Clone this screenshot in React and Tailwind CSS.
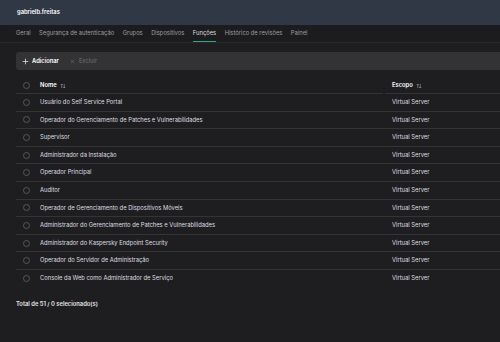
import React from 'react';

const tabs = [
  'Geral',
  'Segurança de autenticação',
  'Grupos',
  'Dispositivos',
  'Funções',
  'Histórico de revisões',
  'Painel'
];

const roles = [
  'Usuário do Self Service Portal',
  'Operador do Gerenciamento de Patches e Vulnerabilidades',
  'Supervisor',
  'Administrador da Instalação',
  'Operador Principal',
  'Auditor',
  'Operador de Gerenciamento de Dispositivos Móveis',
  'Administrador do Gerenciamento de Patches e Vulnerabilidades',
  'Administrador do Kaspersky Endpoint Security',
  'Operador do Servidor de Administração',
  'Console da Web como Administrador de Serviço'
];

const SortIcon = () => (
  <svg className="w-[6px] h-[6px] ml-[3px]" viewBox="0 0 12 12" fill="none" stroke="#a8a8ac" strokeWidth="1.2">
    <path d="M3.5 10V2M1.5 4l2-2 2 2" />
    <path d="M8.5 2v8M6.5 8l2 2 2-2" />
  </svg>
);

const Check = () => (
  <span className="block w-[7px] h-[7px] rounded-full border border-[#57575b]" />
);

const App = () => {
  return (
    <div className="w-[500px] h-[342px] bg-[#1e1e20] overflow-hidden font-['Inter',sans-serif] text-[#e6e6e8]">
      <div className="h-[25px] bg-[#2f3844] flex items-center px-[17px] text-[5.8px] font-semibold text-white">
        gabrielb.freitas
      </div>

      <div className="h-[18px] flex px-[16px] gap-[8.5px] border-b border-[#28282a] bg-[#1c1c1e]">
        {tabs.map((t) => (
          <div
            key={t}
            className={`h-full flex items-center text-[5.8px] border-b-[1.5px] ${
              t === 'Funções' ? 'border-[#2ea588] text-[#dcdcde]' : 'border-transparent text-[#9c9ca0]'
            }`}
          >
            {t}
          </div>
        ))}
      </div>

      <div className="mt-[9px] ml-[16px] h-[18px] bg-[#333336] rounded-l-[3px] flex items-center px-[6px] text-[5.8px]">
        <svg className="w-[7px] h-[7px]" viewBox="0 0 10 10" stroke="#e8e8ea" strokeWidth="1.1">
          <path d="M5 1v8M1 5h8" />
        </svg>
        <span className="ml-[3px] font-semibold text-white">Adicionar</span>
        <svg className="w-[5px] h-[5px] ml-[11px]" viewBox="0 0 10 10" stroke="#6e6e72" strokeWidth="1.3">
          <path d="M1.5 1.5l7 7M8.5 1.5l-7 7" />
        </svg>
        <span className="ml-[4px] text-[#6e6e72]">Excluir</span>
      </div>

      <div className="mt-[8px] ml-[16px] text-[5.8px]">
        <div className="h-[16px] flex">
          <div className="w-[20px] flex items-center justify-center border-b border-[#343437]">
            <Check />
          </div>
          <div className="w-[347px] flex items-center pl-[4px] border-b border-[#343437] font-semibold text-white">
            Nome <SortIcon />
          </div>
          <div className="ml-[2px] flex-1 flex items-center pl-[7px] border-b border-[#343437] font-semibold text-white">
            Escopo <SortIcon />
          </div>
        </div>
        {roles.map((r, i) => (
          <div
            key={i}
            className={`h-[17.6px] flex items-center ${i < roles.length - 1 ? 'border-b border-[#343437]' : ''}`}
          >
            <div className="w-[20px] flex justify-center">
              <Check />
            </div>
            <div className="w-[349px] pl-[4px] text-[#dedee0]">{r}</div>
            <div className="pl-[7px] text-[#dedee0]">Virtual Server</div>
          </div>
        ))}
      </div>

      <div className="mt-[12px] ml-[16px] text-[5.8px] font-semibold text-[#e6e6e8]">
        Total de 51 / 0 selecionado(s)
      </div>
    </div>
  );
};

export default App;
